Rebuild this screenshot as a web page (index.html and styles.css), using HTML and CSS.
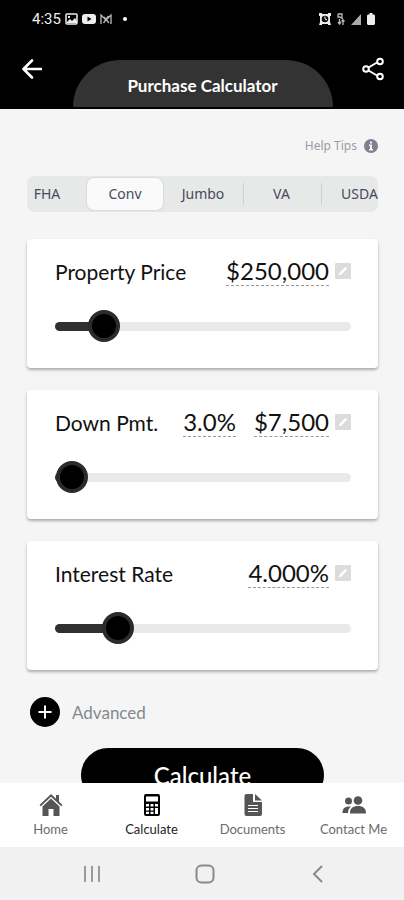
FILE: index.html
```html
<!DOCTYPE html>
<html lang="en">
<head>
  <meta charset="UTF-8" />
  <meta name="viewport" content="width=device-width, initial-scale=1.0"/>
  <title>Purchase Calculator</title>
  <link rel="stylesheet" href="styles.css">
</head>
<body>

<header class="header">
  <div class="status-bar">
    <span class="time">4:35</span>
    <svg width="13" height="12" viewBox="0 0 13 12"><rect x="1" y="1" width="11" height="10" rx="1" fill="none" stroke="#eee" stroke-width="1.5"/><path d="M2 9l3-3 2 2 3-3 2 3v2H2z" fill="#eee"/><path d="M3 3h2v2H3z" fill="#eee"/></svg>
    <svg width="14" height="12" viewBox="0 0 14 12"><rect y="1" width="14" height="10" rx="3" fill="#eee"/><path d="M5.500 3.500v5l4-2.500z" fill="#000"/></svg>
    <svg width="13" height="12" viewBox="0 0 13 12" fill="none" stroke="#bbb" stroke-width="1.300"><path d="M1 11V2l5 5 5-5v9M3.500 10l5-7M9 10L4 4"/></svg>
    <span class="status-dot"></span>
    <div class="status-right">
      <svg width="12" height="12" viewBox="0 0 12 12"><path d="M0 0h3v1h6V0h3v3h-1v6l1 3H9v-1H3v1H0l1-3V3H0z" fill="#eee"/><circle cx="6" cy="6" r="3.300" fill="#111"/><path d="M6 3.500V6l2 1" fill="none" stroke="#eee"/></svg>
      <svg width="8" height="12" viewBox="0 0 8 12" fill="none" stroke="#bbb" stroke-width="1.300"><path d="M1 1h4v4M1 1v3h2l3 2M2.500 6v5M1 9l1.500 2L4 9M6 12V7M4.500 8.500L6 7l1.500 1.500"/></svg>
      <svg width="10" height="12" viewBox="0 0 10 12"><path d="M0 12L10 1v11z" fill="#aaa"/></svg>
      <svg width="8" height="12" viewBox="0 0 8 12"><path d="M2.500 0h3v1.500H7l1 1V11l-1 1H1l-1-1V2.500l1-1h1.500z" fill="#eee"/></svg>
    </div>
  </div>
  <div class="title-bar">
    <button class="icon-button" type="button" aria-label="Back">
      <svg width="20" height="20" viewBox="0 0 20 20" fill="none" stroke="#fff" stroke-width="2.600" stroke-linecap="round" stroke-linejoin="round"><path d="M19 10H2M10 1.500L1.500 10l8.500 8.500"/></svg>
    </button>
    <h1 class="title">Purchase Calculator</h1>
    <button class="icon-button" type="button" aria-label="Share">
      <svg width="22" height="24" viewBox="0 0 22 24" fill="none" stroke="#fff" stroke-width="2"><path d="M6.500 10.500l8.500-5M6.500 13.500l8.500 5"/><circle cx="4" cy="12" r="2.800"/><circle cx="18" cy="4.500" r="2.800"/><circle cx="18" cy="19.500" r="2.800"/></svg>
    </button>
  </div>
</header>

<main class="content">
  <a class="help" href="#">
    <span>Help Tips</span>
    <svg width="14" height="14" viewBox="0 0 14 14"><circle cx="7" cy="7" r="7" fill="#7c8090"/><path d="M5 5.500h3V10h1v1.500H5V10h1V7H5zM6 2.500h2v2H6z" fill="#f5f5f5"/></svg>
  </a>

  <div class="segments" role="radiogroup" aria-label="Loan type">
    <div class="segment-list">
      <label class="segment"><input type="radio" name="loan"><span>FHA</span></label>
      <label class="segment"><input type="radio" name="loan" checked><span>Conv</span></label>
      <label class="segment"><input type="radio" name="loan"><span>Jumbo</span></label>
      <label class="segment divider"><input type="radio" name="loan"><span>VA</span></label>
      <label class="segment divider"><input type="radio" name="loan"><span>USDA</span></label>
    </div>
  </div>

  <form class="cards" id="calculator">
    <section class="card">
      <div class="card-row">
        <label class="card-label" for="price">Property Price</label>
        <input class="value" type="text" id="price" value="$250,000" size="7">
        <svg class="edit" viewBox="0 0 16 16"><rect width="16" height="16" rx="1" fill="#dcdcdc"/><path d="M3.500 12.500l1-2.800 6-6 1.800 1.800-6 6z" fill="#fff"/></svg>
      </div>
      <input class="slider" type="range" min="0" max="2000000" step="1000" value="250000" style="--fill: 12.5%" aria-label="Property Price">
    </section>

    <section class="card">
      <div class="card-row">
        <label class="card-label" for="down">Down Pmt.</label>
        <input class="value" type="text" value="3.0%" size="4" aria-label="Down payment percent">
        <input class="value value-next" type="text" id="down" value="$7,500" size="6">
        <svg class="edit" viewBox="0 0 16 16"><rect width="16" height="16" rx="1" fill="#dcdcdc"/><path d="M3.500 12.500l1-2.800 6-6 1.800 1.800-6 6z" fill="#fff"/></svg>
      </div>
      <input class="slider" type="range" min="2.5" max="100" step="0.5" value="3" style="--fill: 3%" aria-label="Down Pmt.">
    </section>

    <section class="card">
      <div class="card-row">
        <label class="card-label" for="rate">Interest Rate</label>
        <input class="value" type="text" id="rate" value="4.000%" size="6">
        <svg class="edit" viewBox="0 0 16 16"><rect width="16" height="16" rx="1" fill="#dcdcdc"/><path d="M3.500 12.500l1-2.800 6-6 1.800 1.800-6 6z" fill="#fff"/></svg>
      </div>
      <input class="slider" type="range" min="0" max="22.5" step="0.125" value="4" style="--fill: 18%" aria-label="Interest Rate">
    </section>
  </form>

  <button class="advanced" type="button">
    <svg width="30" height="30" viewBox="0 0 30 30"><circle cx="15" cy="15" r="15" fill="#000"/><path d="M15 8.500v13M8.500 15h13" stroke="#fff" stroke-width="2"/></svg>
    <span>Advanced</span>
  </button>

  <button class="calculate" type="submit" form="calculator">Calculate</button>
</main>

<nav class="tabs">
  <a class="tab" href="#">
    <svg width="24" height="24" viewBox="0 0 24 24" fill="#555"><path d="M12 1L0.500 12l1.300 1.300L12 3.800l10.200 9.500 1.300-1.300L20 8.500V2h-3v3.700z"/><path d="M12 5.500L3.500 13.500V23H9.500v-7h5v7h6v-9.500z"/></svg>
    <span>Home</span>
  </a>
  <a class="tab active" href="#">
    <svg width="24" height="24" viewBox="0 0 24 24"><rect x="4" y="1" width="16" height="22" rx="2" fill="#000"/><path d="M6 3.500h12v5H6zM6 11h3v2.500H6zM10.500 11h3v2.500h-3zM15 11h3v2.500h-3zM6 15h3v2.500H6zM10.500 15h3v2.500h-3zM15 15h3v6h-3zM6 18.800h3V21H6zM10.500 18.800h3V21h-3z" fill="#fff"/></svg>
    <span>Calculate</span>
  </a>
  <a class="tab" href="#">
    <svg width="24" height="24" viewBox="0 0 24 24"><path d="M5.500 1H12v8h9v12a2 2 0 0 1-2 2H5.500a2 2 0 0 1-2-2V3a2 2 0 0 1 2-2zM14 1l7 6.500h-7z" fill="#555"/><path d="M7 12.500h10M7 15.500h10M7 18.500h10" stroke="#fff" stroke-width="1.200"/></svg>
    <span>Documents</span>
  </a>
  <a class="tab" href="#">
    <svg width="24" height="24" viewBox="0 0 24 24" fill="#555"><circle cx="6.500" cy="8" r="3.500"/><circle cx="16" cy="7.500" r="4.300"/><path d="M0.500 20c0-5 2.500-7 8.500-6.500-2 1.500-3 3.500-3 6.500zM8 20.500c0-5.500 3-7.500 8-7.500s8 2 8 7.500z"/></svg>
    <span>Contact Me</span>
  </a>
</nav>

<div class="system-bar">
  <svg width="18" height="18" viewBox="0 0 18 18" stroke="#999" stroke-width="2"><path d="M2 1v16M9 1v16M16 1v16"/></svg>
  <svg width="20" height="20" viewBox="0 0 20 20" fill="none" stroke="#8a8a8a" stroke-width="2"><rect x="1.500" y="1.500" width="17" height="17" rx="5"/></svg>
  <svg width="18" height="18" viewBox="0 0 18 18" fill="none" stroke="#8a8a8a" stroke-width="2"><path d="M13 1L5 9l8 8"/></svg>
</div>

</body>
</html>
```
FILE: styles.css
```css
* {
  box-sizing: border-box;
}

body {
  margin: 0;
  height: 100vh;
  display: flex;
  flex-direction: column;
  background: #f5f5f5;
  font-family: Lato, 'Liberation Sans', sans-serif;
  color: #111;
}

button {
  border: none;
  background: none;
  padding: 0;
  font-family: inherit;
  cursor: pointer;
}

a {
  text-decoration: none;
}

/* Header */
.header {
  flex-shrink: 0;
  background: #000;
  color: #fff;
  padding-bottom: 2px;
}

.status-bar {
  display: flex;
  align-items: center;
  gap: 4px;
  height: 37px;
  padding: 0 29px 0 32px;
}

.time {
  font-family: Roboto, sans-serif;
  font-size: 15px;
  color: #eee;
}

.status-dot {
  width: 4px;
  height: 4px;
  margin-left: 6px;
  border-radius: 50%;
  background: #fff;
}

.status-right {
  display: flex;
  gap: 6px;
  margin-left: auto;
}

.title-bar {
  display: flex;
  justify-content: space-between;
  padding: 23px 20px 0 21px;
}

.icon-button {
  display: flex;
  width: 22px;
  height: 18px;
  align-items: center;
  justify-content: center;
}

.title {
  width: 260px;
  margin: 0;
  padding-top: 4px;
  border-radius: 48px 48px 0 0;
  background: #333;
  font-size: 17px;
  font-weight: 700;
  line-height: 43px;
  text-align: center;
}

/* Content */
.content {
  flex: 1;
  min-height: 0;
  display: flex;
  flex-direction: column;
  overflow-y: auto;
  scrollbar-width: none;
  padding: 28px 26px 0 27px;
}

.help {
  display: flex;
  align-items: center;
  align-self: flex-end;
  gap: 7px;
  height: 18px;
  font-family: 'Noto Sans', sans-serif;
  font-size: 12px;
  color: #9a9ba6;
}

.segments {
  flex-shrink: 0;
  height: 36px;
  margin: 22px 0 27px;
  overflow: hidden;
  border-radius: 8px;
  background: #e7e8e8;
}

.segment-list {
  display: flex;
  height: 100%;
  margin-left: -19px;
}

.segment {
  position: relative;
  display: flex;
  flex: 0 0 78px;
  padding: 2px 1px;
  font-family: 'Noto Sans', sans-serif;
  font-size: 14px;
  color: #474a5c;
}

.segment input {
  position: absolute;
  opacity: 0;
}

.segment span {
  flex: 1;
  border-radius: 7px;
  line-height: 32px;
  text-align: center;
}

.segment input:checked + span {
  background: #fafafa;
  box-shadow: 0 0 2px rgba(0,0,0,0.2);
}

.divider::before {
  content: '';
  width: 1px;
  margin: 5px 0;
  background: #cfd0d3;
}

.cards {
  display: flex;
  flex-direction: column;
  gap: 22px;
}

.card {
  height: 129px;
  padding: 16px 27px 0 28px;
  border-radius: 4px;
  background: #fff;
  box-shadow: 0 2px 3px rgba(0,0,0,0.3);
}

.card-row {
  display: flex;
  align-items: center;
  height: 32px;
}

.card-label {
  margin-right: auto;
  font-size: 21px;
}

.value {
  field-sizing: content;
  height: 30px;
  padding: 0;
  border: none;
  border-bottom: 1px dashed #999;
  background: none;
  font-family: inherit;
  font-size: 24px;
  color: #111;
  text-align: right;
}

.value-next {
  margin-left: 18px;
}

.edit {
  width: 16px;
  height: 16px;
  margin-left: 6px;
}

.slider {
  appearance: none;
  display: block;
  width: 100%;
  height: 32px;
  margin: 23px 0 0;
  background: none;
}

.slider::-webkit-slider-runnable-track {
  height: 9px;
  border-radius: 5px;
  background: linear-gradient(to right, #303030 var(--fill), #e9e9eb var(--fill));
}

.slider::-webkit-slider-thumb {
  appearance: none;
  width: 32px;
  height: 32px;
  margin-top: -12px;
  border: 4px solid #2b2b2b;
  border-radius: 50%;
  background: #000;
}

.advanced {
  display: flex;
  align-items: center;
  align-self: flex-start;
  gap: 12px;
  margin: 27px 0 0 3px;
  font-size: 17px;
  color: #85898f;
}

.calculate {
  flex-shrink: 0;
  align-self: center;
  width: 69%;
  height: 54px;
  margin-top: 21px;
  border-radius: 27px;
  background: #000;
  color: #fff;
  font-size: 24px;
  font-weight: 500;
}

/* Bottom bars */
.tabs {
  display: grid;
  grid-template-columns: repeat(4, 1fr);
  flex-shrink: 0;
  height: 64px;
  padding-top: 10px;
  background: #fff;
}

.tab {
  display: flex;
  flex-direction: column;
  align-items: center;
  gap: 3px;
  font-size: 13px;
  line-height: 18px;
  color: #6b6b6b;
}

.tab.active {
  color: #222;
}

.system-bar {
  display: flex;
  flex-shrink: 0;
  align-items: center;
  justify-content: space-between;
  height: 53px;
  padding: 0 77px 0 83px;
  background: #f1f1f1;
}
```
